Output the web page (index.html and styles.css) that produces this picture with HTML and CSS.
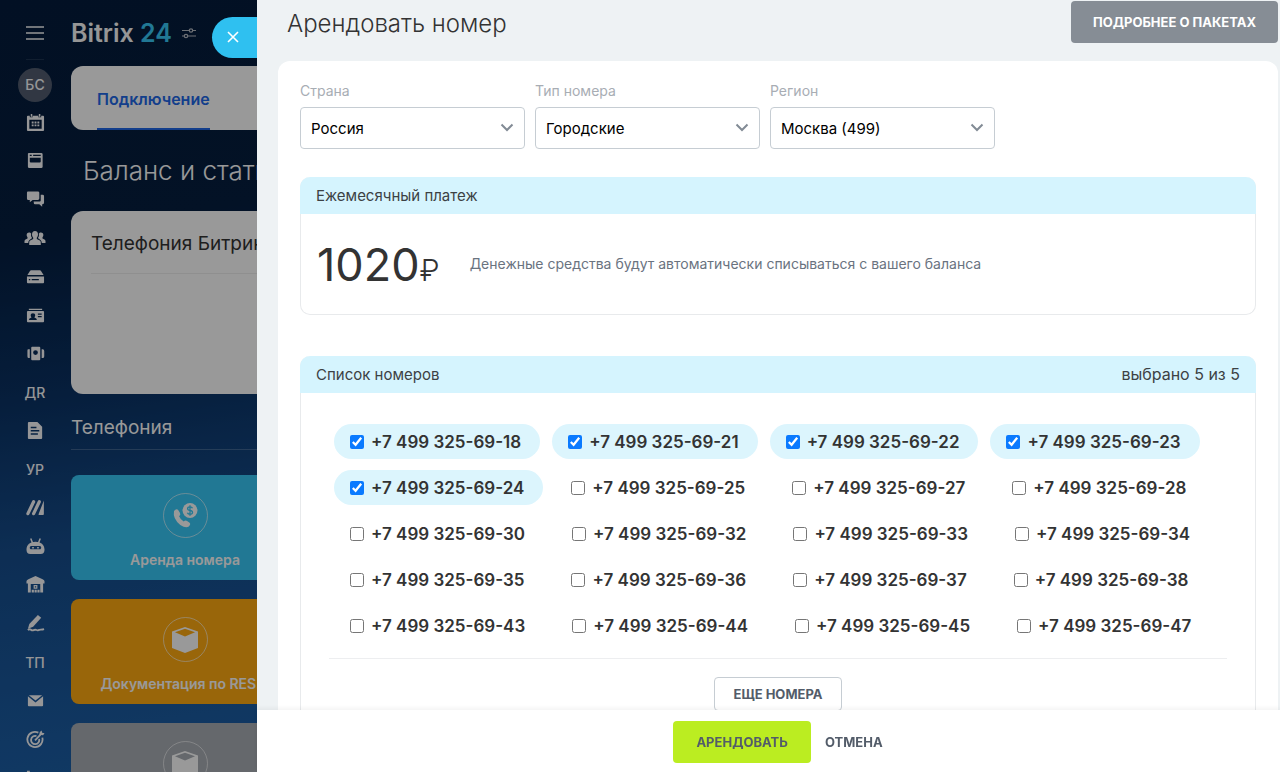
FILE: index.html
```html
<!DOCTYPE html>
<html lang="ru">
<head>
<meta charset="utf-8">
<title>Арендовать номер</title>
<link rel="stylesheet" href="styles.css">
</head>
<body>
<div class="portal">
  <nav class="sidebar" aria-label="Меню">
    <button class="burger" aria-label="Меню"><svg width="18" height="14" viewBox="0 0 18 14"><path d="M0 1h18M0 7h18M0 13h18" stroke="currentColor" stroke-width="1.6"/></svg></button>
    <a class="avatar" href="#">БС</a>
    <ul class="menu">
      <li><a href="#" aria-label="Календарь"><svg viewBox="0 0 20 20"><path fill-rule="evenodd" d="M2 3h2v1.500h3V3h6v1.500h3V3h2q1 0 1 1v14q0 1-1 1H2q-1 0-1-1V4q0-1 1-1zM3.500 7v9.500h13V7zM5 1h1.600v3H5zM13.500 1h1.600v3h-1.600z"/><path d="M6 9h2v2H6zM9 9h2v2H9zM12 9h2v2h-2zM6 12h2v2H6zM9 12h2v2H9zM12 12h2v2h-2z"/></svg></a></li>
      <li><a href="#" aria-label="Лента"><svg viewBox="0 0 20 20"><path fill-rule="evenodd" d="M3 2h13q1.500 0 1.500 1.500v13q0 1.500-1.500 1.500H3.500Q2 18 2 16.500V3q0-1 1-1zM4 7v4q0 1 1 1h9.500q1 0 1-1V7zM4 4v1.300h2V4zM7.500 4v1.300h8V4z"/></svg></a></li>
      <li><a href="#" aria-label="Чат"><svg viewBox="0 0 20 20"><path d="M2 1.500h10.500q1.500 0 1.500 1.500v6q0 1.500-1.500 1.500H7L4 13v-2.500H2Q1 10.500 1 9V3q0-1.500 1-1.500z"/><path d="M15.500 5h2q1.500 0 1.500 1.500v7q0 1.500-1.500 1.500H17v2.500L14 15H9.500Q8 15 8 12h6.500q1 0 1-1z"/></svg></a></li>
      <li><a href="#" aria-label="Группы"><svg class="wide" viewBox="0 0 22 20"><path d="M11 3c2 0 3 1.300 3 3.500 0 1.500-.7 2.500-1.200 3.200v1.300l3 1.500q1 .6 1 2V17H5.200v-2.500q0-1.400 1-2l3-1.500V9.700C8.700 9 8 8 8 6.500 8 4.300 9 3 11 3z"/><path d="M5 4.500c1 0 1.800.4 2.200 1.200-.5 2 .1 3.400 1 4.400-1.800 1.200-4 2.200-4 4.900H.5v-2q0-1 1-1.500l2-1V9.300C2 7.500 2.500 4.500 5 4.500zM17 4.500c-1 0-1.800.4-2.200 1.200.5 2-.1 3.400-1 4.400 1.800 1.200 4 2.200 4 4.900h3.700v-2q0-1-1-1.500l-2-1V9.300C20 7.500 19.500 4.500 17 4.500z"/></svg></a></li>
      <li><a href="#" aria-label="Диск"><svg viewBox="0 0 20 20"><path fill-rule="evenodd" d="M5.500 3.500h9q1 0 1.500 1l2.500 4h-17l2.500-4q.5-1 1.500-1zM1 10h18v6q0 1-1 1H2q-1 0-1-1zM3 12.500V14h1.500v-1.500zM6 12.500V14h7.500v-1.500z"/></svg></a></li>
      <li><a href="#" aria-label="CRM"><svg viewBox="0 0 20 20"><path fill-rule="evenodd" d="M3 3h14v1.200H3zM2 5.200h16q1 0 1 1V16q0 1-1 1H2q-1 0-1-1V6.200q0-1 1-1zM3 14.800h8.500q0-1.800-2.700-2.700.9-1 .9-2.500 0-2-2.400-2T4.900 9.600q0 1.500.9 2.500Q3 13 3 14.800zM12.500 8v1.300h4V8zM12.500 10.500v1.300h4v-1.300z"/></svg></a></li>
      <li><a href="#" aria-label="Маркет"><svg viewBox="0 0 20 20"><path fill-rule="evenodd" d="M6.500 3h7.500q1 0 1 1v12q0 1-1 1H6.500q-1 0-1-1V4q0-1 1-1zM10 6.500A2.500 2.500 0 1 0 10 11.500 2.500 2.500 0 1 0 10 6.500zM2 5.500h2v9.300H2.500Q1.500 14.500 1.500 13V7q0-1.300.5-1.500zM16.500 5.500h1.500q1.200.5 1.200 2v5.500q0 1.500-1.200 1.800h-1.500z"/></svg></a></li>
      <li><a class="abbr" href="#">ДR</a></li>
      <li><a href="#" aria-label="Документы"><svg viewBox="0 0 20 20"><path fill-rule="evenodd" d="M3 1h9l5 5v12q0 1-1 1H3q-1 0-1-1V2q0-1 1-1zM5 6v1.500h6V6zM5 9.500V11h9V9.500zM5 13v1.500h7.500V13z"/></svg></a></li>
      <li><a class="abbr" href="#">УР</a></li>
      <li><a href="#" aria-label="Маркетинг"><svg viewBox="0 0 20 20"><path d="M2 16.500L8 4M8 16.500L14 4" stroke="currentColor" stroke-width="3.400" stroke-linecap="round"/><path d="M18.800 2.500V17q0 .8-1 .8h-4q-1 0-.5-1z"/></svg></a></li>
      <li><a href="#" aria-label="Роботы"><svg viewBox="0 0 20 20"><path d="M5 1.500l2 5M15 1.500l-2 5" stroke="currentColor" stroke-width="1.600"/><path fill-rule="evenodd" d="M10 5c5.500 0 9.500 3 9.500 8.500 0 3-1.500 4.500-4 4.500h-11C2 18 .5 16.500.5 13.500.5 8 4.500 5 10 5zM5.500 9.500C3.500 9.500 3.500 13 5.500 13h9c2 0 2-3.500 0-3.500zM6.500 10.500h1.800V12H6.500zM11.700 10.500h1.800V12h-1.800z"/></svg></a></li>
      <li><a href="#" aria-label="Склад"><svg viewBox="0 0 20 20"><path fill-rule="evenodd" d="M10 1L17.500 4.500q2 1 2 2V9H18v9.500h-3V9.500H5v9H2V9H.5V6.500q0-1 2-2z"/><path fill-rule="evenodd" d="M8 10.500h4v4H8zM9.300 11.800v1.400h1.400v-1.400zM6 15.500h2.300v3H6zM9 15.500h2.300v3H9zM12 15.500h2.300v3H12z"/></svg></a></li>
      <li><a href="#" aria-label="Подпись"><svg viewBox="0 0 20 20"><path d="M12.500 1L16 4 7.500 13.500 2 15.500 3.500 10.500z"/><path d="M2 17c3-3 3 1.500 6 0s3 1 5 0 3 0 6-1" fill="none" stroke="currentColor" stroke-width="1.900"/></svg></a></li>
      <li><a class="abbr" href="#">ТП</a></li>
      <li><a href="#" aria-label="Почта"><svg viewBox="0 0 20 20"><path d="M3 4.500h14L10 10z"/><path d="M2 5.500l8 6.500 8-6.500V15q0 1-1 1H3q-1 0-1-1z"/></svg></a></li>
      <li><a href="#" aria-label="Цели"><svg viewBox="0 0 20 20"><g fill="none" stroke="currentColor" stroke-width="1.900"><path d="M13 2.800A8 8 0 1 0 17.200 8M11 6.500A4.300 4.300 0 1 0 13.800 9.500M9.500 11L16 4"/></g><path d="M14 5l.5-3 2-1.500.5 2.500 2.500.5L18 5.500z"/></svg></a></li>
      <li><a href="#" aria-label="Отчёты"><svg viewBox="0 0 20 20"><path d="M1 3h3v14H1zM6 9h3v8H6z"/></svg></a></li>
    </ul>
  </nav>

  <main class="page">
    <header class="brand">
      <span class="brand-name">Bitrix <span class="brand-num">24</span></span>
      <svg width="14" height="12" viewBox="0 0 14 12" fill="none" stroke="currentColor" stroke-width="1.200"><path d="M0 3.500h7M11 3.500h3M0 9h2M6 9h8"/><circle cx="9" cy="3.500" r="1.700"/><circle cx="4" cy="9" r="1.700"/></svg>
    </header>
    <div class="tabs"><a class="tab" href="#">Подключение</a></div>
    <h1 class="page-title">Баланс и статистика</h1>
    <section class="balance"><h2 class="balance-title">Телефония Битрикс24</h2></section>
    <h2 class="group-title">Телефония</h2>
    <div class="tiles">
      <a class="tile tile-blue" href="#">
        <span class="tile-icon"><svg width="28" height="28" viewBox="0 0 28 28"><path fill="currentColor" d="M3 9q2.500-3 4.500-.5L9 11q1 1.800-.9 3.300 1.400 3.500 4.600 5.200 1.800-1.600 3.400-.4l2.200 1.500q2 1.500-.5 4-3 2-8.500-1.600Q1.500 16.500 3 9z"/><circle cx="19" cy="8.500" r="7.500" fill="currentColor"/><path d="M21.500 6.300q-.6-1.500-2.500-1.500-2.400 0-2.400 1.800t2.400 1.900 2.500 1.900-2.500 1.800q-2 0-2.600-1.500M19 3.300v10.400" fill="none" stroke="#37c9f7" stroke-width="1.300"/></svg></span>
        <span>Аренда номера</span>
      </a>
      <a class="tile tile-orange" href="#">
        <span class="tile-icon"><svg width="28" height="28" viewBox="0 0 28 28"><path fill="currentColor" fill-rule="evenodd" d="M14 1l13 4.500V22l-13 5-13-5V5.500zM14 2.800L4 6.200l10 4.300 10-4.300z"/></svg></span>
        <span>Документация по RES...</span>
      </a>
      <a class="tile tile-gray" href="#" aria-label="Документация">
        <span class="tile-icon"><svg width="28" height="28" viewBox="0 0 28 28"><path fill="currentColor" fill-rule="evenodd" d="M14 1l13 4.500V22l-13 5-13-5V5.500zM14 2.800L4 6.200l10 4.300 10-4.300z"/></svg></span>
      </a>
    </div>
  </main>
</div>
<div class="dim"></div>

<button class="close" aria-label="Закрыть"><svg width="12" height="12" viewBox="0 0 12 12"><path d="M1 1l10 10M11 1L1 11" stroke="currentColor" stroke-width="1.600"/></svg></button>
<form class="slider">
  <div class="slider-head">
    <h1 class="slider-title">Арендовать номер</h1>
    <button class="btn btn-gray" type="button">Подробнее о пакетах</button>
  </div>
  <div class="slider-body">
    <div class="fields">
      <div class="field">
        <label for="country">Страна</label>
        <span class="select"><select id="country"><option>Россия</option></select><svg width="14" height="10" viewBox="0 0 14 10"><path d="M1.500 1.500l5.500 5.500 5.500-5.500" fill="none" stroke="currentColor" stroke-width="2"/></svg></span>
      </div>
      <div class="field">
        <label for="type">Тип номера</label>
        <span class="select"><select id="type"><option>Городские</option></select><svg width="14" height="10" viewBox="0 0 14 10"><path d="M1.500 1.500l5.500 5.500 5.500-5.500" fill="none" stroke="currentColor" stroke-width="2"/></svg></span>
      </div>
      <div class="field">
        <label for="region">Регион</label>
        <span class="select"><select id="region"><option>Москва (499)</option></select><svg width="14" height="10" viewBox="0 0 14 10"><path d="M1.500 1.500l5.500 5.500 5.500-5.500" fill="none" stroke="currentColor" stroke-width="2"/></svg></span>
      </div>
    </div>

    <section class="block">
      <header class="block-head"><h2>Ежемесячный платеж</h2></header>
      <div class="payment">
        <div class="price">1020<span class="currency">₽</span></div>
        <p class="note">Денежные средства будут автоматически списываться с вашего баланса</p>
      </div>
    </section>

    <section class="block">
      <header class="block-head"><h2>Список номеров</h2><span class="count">выбрано 5 из 5</span></header>
      <div class="numbers-wrap">
        <div class="numbers">
          <label class="number"><input type="checkbox" checked>+7 499 325-69-18</label>
          <label class="number"><input type="checkbox" checked>+7 499 325-69-21</label>
          <label class="number"><input type="checkbox" checked>+7 499 325-69-22</label>
          <label class="number"><input type="checkbox" checked>+7 499 325-69-23</label>
          <label class="number"><input type="checkbox" checked>+7 499 325-69-24</label>
          <label class="number"><input type="checkbox">+7 499 325-69-25</label>
          <label class="number"><input type="checkbox">+7 499 325-69-27</label>
          <label class="number"><input type="checkbox">+7 499 325-69-28</label>
          <label class="number"><input type="checkbox">+7 499 325-69-30</label>
          <label class="number"><input type="checkbox">+7 499 325-69-32</label>
          <label class="number"><input type="checkbox">+7 499 325-69-33</label>
          <label class="number"><input type="checkbox">+7 499 325-69-34</label>
          <label class="number"><input type="checkbox">+7 499 325-69-35</label>
          <label class="number"><input type="checkbox">+7 499 325-69-36</label>
          <label class="number"><input type="checkbox">+7 499 325-69-37</label>
          <label class="number"><input type="checkbox">+7 499 325-69-38</label>
          <label class="number"><input type="checkbox">+7 499 325-69-43</label>
          <label class="number"><input type="checkbox">+7 499 325-69-44</label>
          <label class="number"><input type="checkbox">+7 499 325-69-45</label>
          <label class="number"><input type="checkbox">+7 499 325-69-47</label>
        </div>
        <div class="more"><button class="btn btn-outline" type="button">Еще номера</button></div>
      </div>
    </section>
  </div>
  <footer class="slider-foot">
    <button class="btn btn-green" type="button">Арендовать</button>
    <button class="btn btn-link" type="button">Отмена</button>
  </footer>
</form>
</body>
</html>
```
FILE: styles.css
```css
* { box-sizing: border-box; }
body {
  margin: 0;
  height: 100vh;
  overflow: hidden;
  font-family: Inter, "Open Sans", sans-serif;
  color: #333;
}
h1, h2, p, ul { margin: 0; padding: 0; font-weight: 400; }
a { color: inherit; text-decoration: none; }
button, select { font-family: inherit; }

.portal {
  display: flex;
  height: 100vh;
  overflow: hidden;
  color: #fff;
  background: linear-gradient(172deg, #041c3c 0%, #051e40 25%, #0a3264 42%, #164d8c 58%, #1b5ca2 78%, #1a6ab0 100%);
}
.dim { position: fixed; inset: 0; background: rgba(0, 0, 0, 0.4); }

.sidebar {
  display: flex;
  flex-direction: column;
  align-items: center;
  width: 70px;
  flex: none;
  color: #fafafc;
}
.burger {
  width: 18px;
  height: 60px;
  padding: 10px 0 0;
  border: 0;
  border-bottom: 1px solid rgba(255, 255, 255, 0.1);
  background: none;
  color: inherit;
  flex: none;
}
.avatar {
  flex: none;
  width: 34px;
  height: 34px;
  margin: 8px 0 1px;
  border-radius: 50%;
  background: #525d70;
  font-size: 14px;
  line-height: 34px;
  font-weight: 500;
  text-align: center;
}
.menu {
  flex: 1;
  display: grid;
  grid-auto-rows: 1fr;
  margin-bottom: -25px;
  list-style: none;
}
.menu li { display: flex; align-items: center; justify-content: center; }
.menu a { display: block; }
.menu svg { display: block; width: 19px; height: 19px; fill: currentColor; }
.menu .wide { width: 22px; height: 20px; }
.menu .abbr { font-size: 14px; font-weight: 500; }

.page { flex: 1; min-width: 0; padding-left: 1px; }
.brand {
  display: flex;
  align-items: center;
  gap: 10px;
  height: 66px;
  color: #b8bcc4;
}
.brand-name { font-size: 25px; font-weight: 600; color: #fafafa; }
.brand-num { color: #37c9f7; }
.tabs {
  height: 64px;
  padding-left: 26px;
  border-radius: 12px;
  background: #fff;
}
.tab {
  display: inline-block;
  height: 64px;
  border-bottom: 2px solid #2168e8;
  color: #2168e8;
  font-size: 16px;
  line-height: 66px;
  font-weight: 600;
}
.page-title {
  padding: 25px 0 0 12px;
  font-size: 26px;
  line-height: 32px;
  font-weight: 300;
  white-space: nowrap;
}
.balance {
  height: 183px;
  margin: 24px 0 20px;
  padding: 20px 20px 0;
  border-radius: 12px;
  background: #fff;
  white-space: nowrap;
}
.balance-title {
  height: 43px;
  border-bottom: 1px solid #eee;
  color: #333;
  font-size: 19px;
  line-height: 26px;
}
.group-title {
  height: 36px;
  border-bottom: 1px solid rgba(255, 255, 255, 0.2);
  font-size: 19px;
  line-height: 28px;
}
.tiles { display: grid; gap: 19px; width: 228px; padding-top: 25px; }
.tile {
  display: flex;
  flex-direction: column;
  align-items: center;
  gap: 13px;
  height: 105px;
  padding-top: 18px;
  border-radius: 8px;
  font-size: 14px;
  line-height: 18px;
  font-weight: 600;
  white-space: nowrap;
}
.tile-blue { background: #37c9f7; }
.tile-orange { background: #ffab12; }
.tile-gray { background: #a8adb4; }
.tile-icon {
  display: flex;
  flex: none;
  align-items: center;
  justify-content: center;
  width: 45px;
  height: 45px;
  border: 1px solid rgba(255, 255, 255, 0.6);
  border-radius: 50%;
}

.close {
  position: fixed;
  top: 17px;
  left: 212px;
  width: 60px;
  height: 41px;
  padding: 0 0 0 15px;
  border: 0;
  border-radius: 21px 0 0 21px;
  background: #2fc0f0;
  color: #fff;
  text-align: left;
}

.slider {
  position: fixed;
  inset: 0 0 0 257px;
  display: flex;
  flex-direction: column;
  background: #eef2f4;
}
.slider-head {
  flex: none;
  display: flex;
  align-items: flex-start;
  justify-content: space-between;
  height: 61px;
  padding: 1px 2px 0 30px;
}
.slider-title { font-size: 24px; line-height: 46px; font-weight: 300; }
.btn {
  height: 42px;
  border: 0;
  border-radius: 4px;
  font-size: 13px;
  font-weight: 700;
  text-transform: uppercase;
}
.btn-gray { padding: 0 22px; background: #868d95; color: #fff; }
.slider-body {
  flex: 1;
  min-height: 0;
  overflow: hidden;
  margin: 0 2px 0 21px;
  padding: 20px 22px 0;
  border-radius: 12px 12px 0 0;
  background: #fff;
}
.fields { display: flex; gap: 10px; margin-bottom: 28px; }
.field { width: 225px; }
.field label { display: block; color: #a8adb4; font-size: 14px; line-height: 20px; margin-bottom: 6px; }
.select { display: block; position: relative; }
.select select {
  display: block;
  width: 100%;
  height: 42px;
  padding: 0 10px;
  border: 1px solid #c6cdd3;
  border-radius: 4px;
  background: #fff;
  appearance: none;
  color: #000;
  font-size: 15px;
}
.select svg { position: absolute; right: 11px; top: 16px; color: #828b95; pointer-events: none; }

.block { margin-bottom: 41px; border: 1px solid #e8eaec; border-top: 0; border-radius: 10px; }
.block-head {
  display: flex;
  justify-content: space-between;
  margin: 0 -1px;
  padding: 0 16px;
  border-radius: 10px 10px 0 0;
  background: #d5f4fe;
  color: #3c4144;
  line-height: 37px;
}
.block-head h2 { font-size: 15px; }
.count { font-size: 16px; }
.payment { display: flex; align-items: center; gap: 30px; height: 100px; padding-left: 16px; }
.price { padding-top: 6px; font-size: 45px; line-height: 56px; }
.currency { font-size: 30px; font-weight: 300; }
.note { color: #6a737f; font-size: 14px; line-height: 20px; }

.numbers-wrap { padding: 31px 28px 28px; }
.numbers {
  display: flex;
  flex-wrap: wrap;
  gap: 11px 12px;
  padding: 0 5px 15px;
  border-bottom: 1px solid #edeef0;
}
.number {
  display: flex;
  align-items: center;
  gap: 7px;
  height: 35px;
  padding: 0 19px 0 16px;
  border-radius: 18px;
  color: #333;
  font-size: 17px;
  font-weight: 600;
}
.number:has(:checked) { background: #dcf5fd; }
.number input { width: 14px; height: 14px; margin: 0; accent-color: #0a7aff; }
.more { display: flex; justify-content: center; padding-top: 18px; }
.btn-outline { height: 34px; padding: 0 19px; border: 1px solid #c6cdd3; background: #fff; color: #535c69; }
.slider-foot {
  flex: none;
  display: flex;
  align-items: center;
  justify-content: center;
  gap: 14px;
  height: 62px;
  padding: 2px 2px 0 21px;
  background: #fff;
  box-shadow: 0 -2px 4px rgba(0, 0, 0, 0.05);
  position: relative;
}
.btn-green { padding: 0 23px; background: #bbed21; color: #535c69; }
.btn-link { padding: 0; background: none; color: #535c69; }
```
